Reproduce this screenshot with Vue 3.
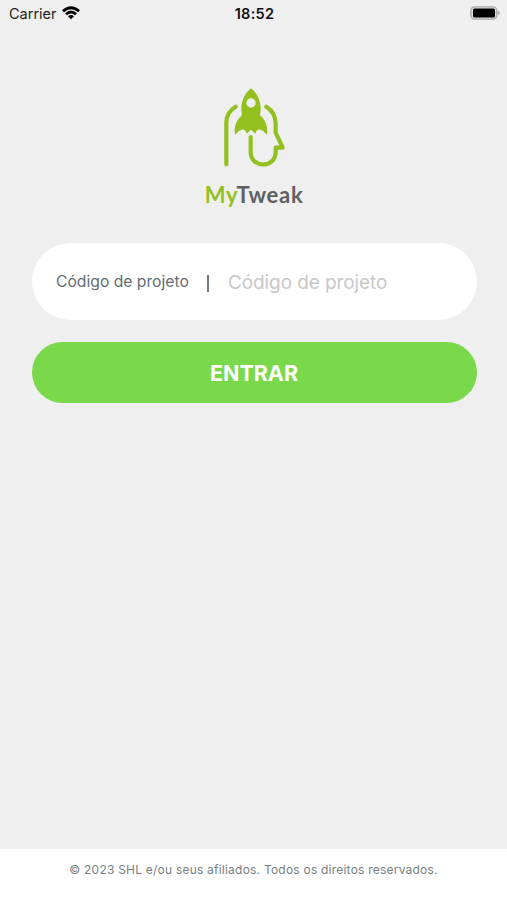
<script setup>
import { ref } from 'vue'

const projectCode = ref('')
</script>

<template>
  <main class="screen">
    <header class="status">
      <div class="carrier">
        <span>Carrier</span>
        <svg class="wifi" viewBox="0 0 54 42" aria-hidden="true">
          <path d="M0 13Q27-12 54 13L48 19Q27 0 6 19Z" />
          <path d="M9 22Q27 5 45 22L39 28Q27 17 15 28Z" />
          <path d="M18 31Q27 23 36 31L27 40Z" />
        </svg>
      </div>
      <time class="clock">18:52</time>
      <div class="power">
        <svg class="battery" viewBox="0 0 30 14" aria-hidden="true">
          <rect x="0.9" y="0.9" width="25.8" height="12.2" rx="3.6" fill="#e0e0e0" stroke="#a9a9a9" stroke-width="1.4" />
          <rect x="3" y="2.5" width="22" height="9" rx="1.5" fill="#000" />
          <path d="M28 4.7Q30 5.5 30 7T28 9.3Z" fill="#a9a9a9" />
        </svg>
      </div>
    </header>

    <section class="brand">
      <svg class="mark" viewBox="0 0 270 285" aria-hidden="true">
        <g fill="none" stroke="#93c01f" stroke-width="12.5" stroke-linejoin="round">
          <path d="M49 253V126Q49 97 77 80" stroke-linecap="round" />
          <path d="M122 171V216C122 266 197 266 197 216V203H218L197 158V132Q197 97 169 80" stroke-linecap="round" />
        </g>
        <path
          fill="#93c01f"
          fill-rule="evenodd"
          d="M123 25C104 40 93 63 94 91L96 106C79 121 71 140 75 164Q86 151 99 148Q106 149 110 161L123 149L136 161Q140 149 147 148Q160 151 171 164C175 140 167 121 150 106L152 91C153 63 142 40 123 25ZM123 55a14 14 0 1 1 0 28a14 14 0 1 1 0-28Z"
        />
      </svg>
      <h1 class="wordmark"><span class="accent">My</span>Tweak</h1>
    </section>

    <form class="login" @submit.prevent>
      <label class="field">
        <span class="label">Código de projeto</span>
        <span class="divider"></span>
        <input v-model="projectCode" class="input" type="text" placeholder="Código de projeto" />
      </label>
      <button class="submit" type="submit">ENTRAR</button>
    </form>

    <footer class="footer">© 2023 SHL e/ou seus afiliados. Todos os direitos reservados.</footer>
  </main>
</template>

<style>
body {
  background: #efefef;
}
</style>

<style scoped>
.screen {
  display: flex;
  flex-direction: column;
  height: 900px;
  box-sizing: border-box;
  background: #efefef;
  font-family: Inter, "Liberation Sans", sans-serif;
}

.status {
  display: grid;
  grid-template-columns: 1fr auto 1fr;
  align-items: center;
  height: 26px;
  padding: 0 7px 0 9px;
  font-size: 14.5px;
  color: #222;
}

.carrier {
  display: flex;
  align-items: center;
  gap: 5px;
}

.wifi {
  width: 18px;
  height: 14px;
  fill: #000;
}

.clock {
  font-weight: 600;
  letter-spacing: 0.3px;
  color: #111;
}

.power {
  display: flex;
  justify-content: flex-end;
}

.battery {
  width: 30px;
  height: 14px;
}

.brand {
  display: flex;
  flex-direction: column;
  align-items: center;
  height: 163px;
  padding: 54px 0 0 1px;
}

.mark {
  width: 90px;
  height: 95px;
  margin-left: 2px;
}

.wordmark {
  margin: 5px 0 0;
  font-family: Lato, sans-serif;
  font-size: 22px;
  line-height: 30px;
  font-weight: 700;
  letter-spacing: 0.7px;
  color: #606062;
}

.accent {
  color: #93c01f;
}

.login {
  display: flex;
  flex-direction: column;
  gap: 22px;
  padding: 0 30.5px 0 31.5px;
}

.field {
  display: flex;
  align-items: center;
  height: 77px;
  box-sizing: border-box;
  padding: 0 24.5px;
  border-radius: 39px;
  background: #fff;
}

.label {
  width: 133px;
  flex: none;
  white-space: nowrap;
  font-size: 15.7px;
  color: #636d72;
}

.divider {
  width: 2px;
  height: 17px;
  margin: 3px 19px 0 18px;
  background: #737b80;
}

.input {
  flex: 1;
  min-width: 0;
  padding: 1px 0 0;
  border: 0;
  outline: 0;
  background: transparent;
  font: 19px Inter, sans-serif;
  letter-spacing: -0.1px;
  color: #636d72;
}

.input::placeholder {
  color: #c8c8c8;
  opacity: 1;
}

.submit {
  height: 61px;
  padding: 0;
  border: 0;
  border-radius: 31px;
  background: #7ad84b;
  font: 700 21.5px Inter, sans-serif;
  color: #fff;
}

.footer {
  height: 51px;
  box-sizing: border-box;
  margin-top: auto;
  padding-top: 13px;
  background: #fff;
  text-align: center;
  white-space: nowrap;
  font-size: 12px;
  line-height: 16px;
  letter-spacing: 0.22px;
  color: #777f83;
}
</style>
